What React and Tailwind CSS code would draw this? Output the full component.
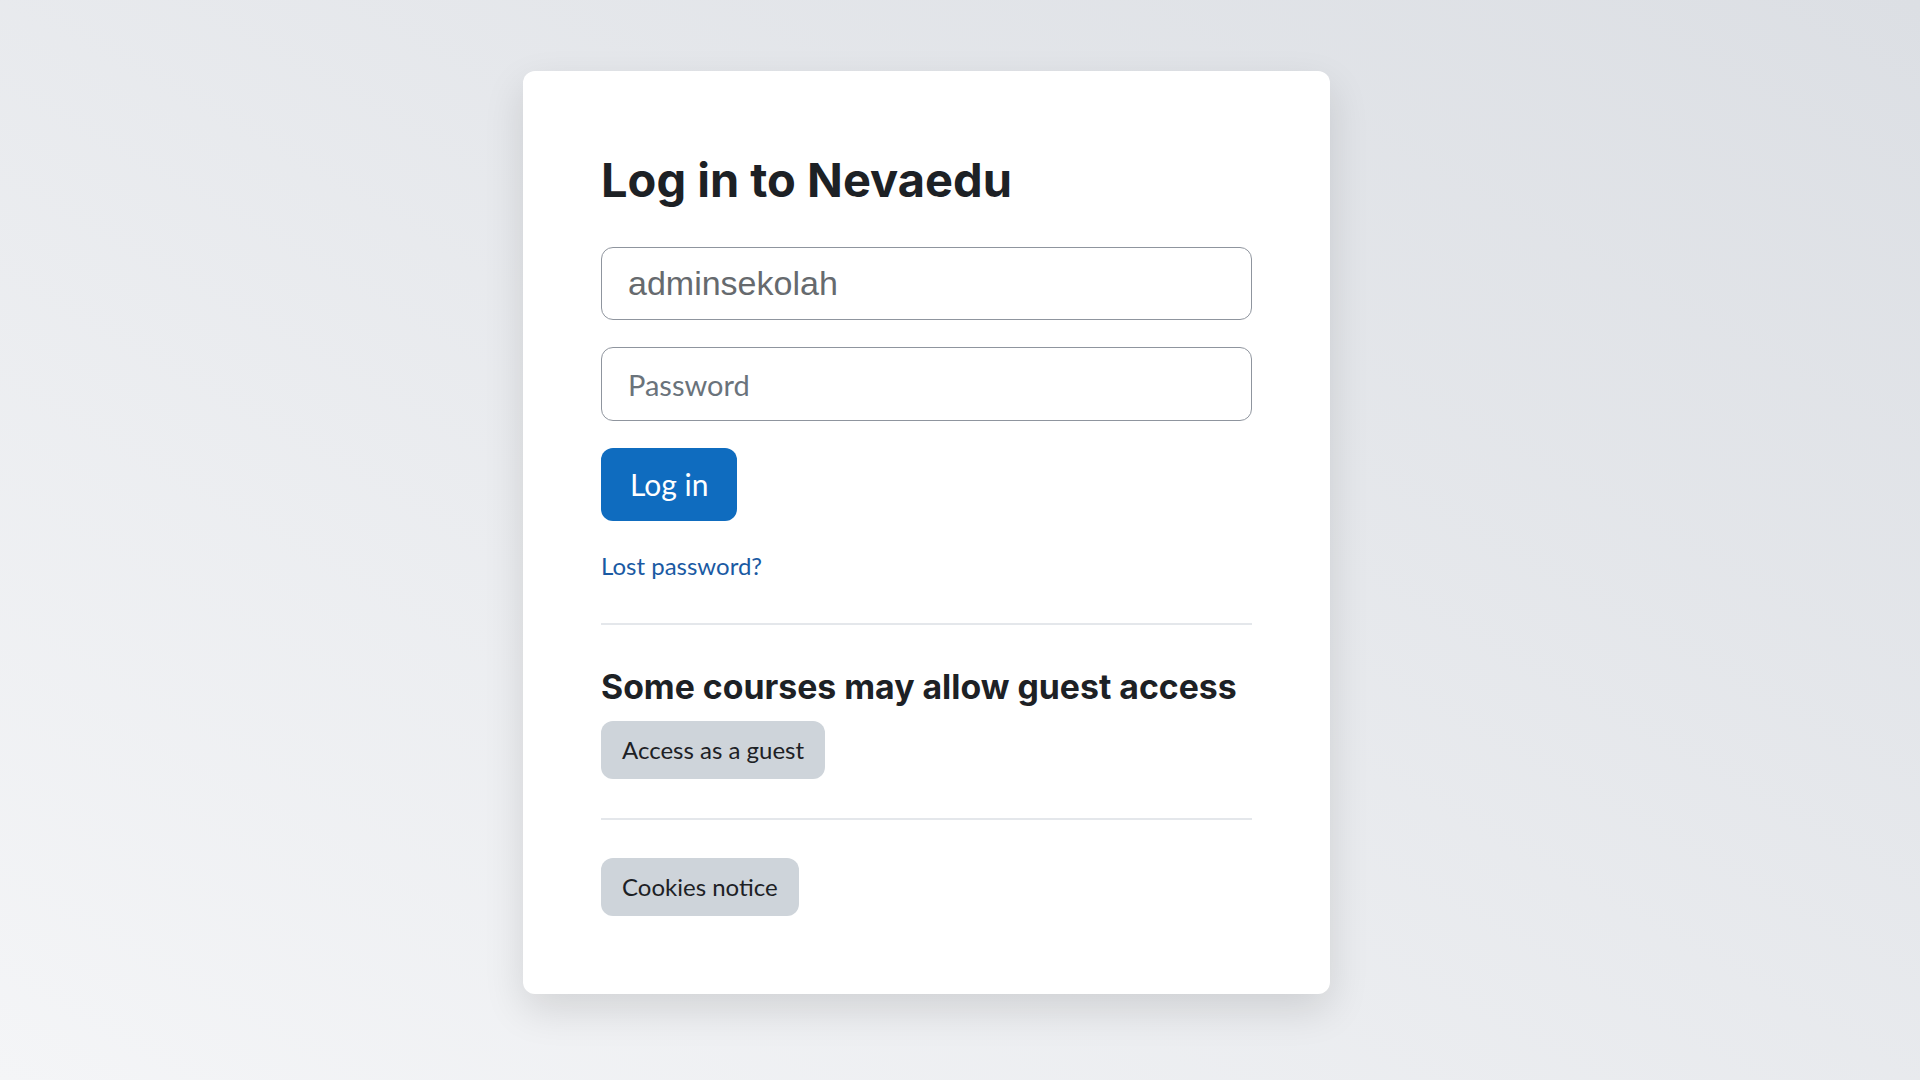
import React from "react";

const App = () => {
  return (
    <div className="min-h-screen w-full bg-gradient-to-tr from-[#f4f5f7] to-[#dcdfe4] flex justify-center pr-[67px] pt-[71px] pb-[87px] font-['Lato',sans-serif]">
      <div className="w-[807px] rounded-[12px] bg-white shadow-[0_16px_40px_rgba(0,0,0,0.12)] px-[78px] pt-[78px] pb-[78px]">
        <h1 className="text-[47px] leading-[54px] font-bold text-[#1d2125] mt-[4px] font-['Inter',sans-serif]">
          Log in to Nevaedu
        </h1>
        <form className="mt-[40px] flex flex-col gap-[27px]" onSubmit={(e) => e.preventDefault()}>
          <input
            type="text"
            defaultValue="adminsekolah"
            className="h-[73px] w-full rounded-[12px] border border-[#8f959e] px-[26px] text-[34px] text-[#666a6e] font-['Liberation_Sans',sans-serif] outline-none"
          />
          <input
            type="password"
            placeholder="Password"
            className="h-[74px] w-full rounded-[12px] border border-[#8f959e] px-[26px] text-[29px] text-[#1d2125] placeholder:text-[#6a737b] outline-none"
          />
          <div>
            <button
              type="submit"
              className="h-[73px] rounded-[12px] bg-[#0f6cbf] px-[29px] text-[30px] text-white"
            >
              Log in
            </button>
          </div>
        </form>
        <a href="#" className="mt-[28px] inline-block text-[24px] leading-[34px] text-[#1a5aa3]">
          Lost password?
        </a>
        <div className="mt-[40px] h-[2px] bg-[#e4e7eb]" />
        <h2 className="mt-[42px] text-[33.8px] leading-[40px] font-bold text-[#1d2125] font-['Inter',sans-serif]">
          Some courses may allow guest access
        </h2>
        <button className="mt-[14px] h-[58px] rounded-[12px] bg-[#ced4da] px-[21px] text-[24px] text-[#1d2125]">
          Access as a guest
        </button>
        <div className="mt-[39px] h-[2px] bg-[#e4e7eb]" />
        <button className="mt-[38px] h-[58px] rounded-[12px] bg-[#ced4da] px-[21px] text-[24px] text-[#1d2125]">
          Cookies notice
        </button>
      </div>
    </div>
  );
};

export default App;
